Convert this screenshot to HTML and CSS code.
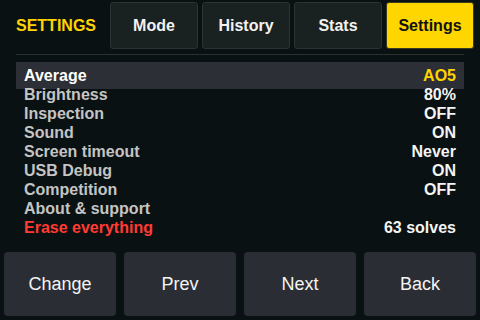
FILE: index.html
```html
<!DOCTYPE html>
<html lang="en">
<head>
    <meta charset="UTF-8">
    <meta name="viewport" content="width=device-width, initial-scale=1.0">
    <title>Settings</title>
    <link rel="stylesheet" href="styles.css">
</head>
<body>
    <!-- Top bar -->
    <div class="top-bar">
        <div class="page-title">SETTINGS</div>
        <div class="tabs">
            <div class="tab">Mode</div>
            <div class="tab">History</div>
            <div class="tab">Stats</div>
            <div class="tab active">Settings</div>
        </div>
    </div>
    <div class="divider"></div>

    <!-- Settings list -->
    <div class="settings-list">
        <div class="row selected"><span>Average</span><span class="value accent">AO5</span></div>
        <div class="row"><span>Brightness</span><span class="value">80%</span></div>
        <div class="row"><span>Inspection</span><span class="value">OFF</span></div>
        <div class="row"><span>Sound</span><span class="value">ON</span></div>
        <div class="row"><span>Screen timeout</span><span class="value">Never</span></div>
        <div class="row"><span>USB Debug</span><span class="value">ON</span></div>
        <div class="row"><span>Competition</span><span class="value">OFF</span></div>
        <div class="row"><span>About &amp; support</span><span class="value"></span></div>
        <div class="row danger"><span>Erase everything</span><span class="value">63 solves</span></div>
    </div>

    <!-- Bottom buttons -->
    <div class="button-bar">
        <div class="btn">Change</div>
        <div class="btn">Prev</div>
        <div class="btn">Next</div>
        <div class="btn">Back</div>
    </div>
</body>
</html>
```

FILE: styles.css
```css
body {
    margin: 0;
    padding: 0;
    width: 480px;
    height: 320px;
    display: flex;
    flex-direction: column;
    background-color: #0a1112;
    font-family: "Liberation Sans", Arial, sans-serif;
    overflow: hidden;
}

.top-bar {
    display: flex;
    align-items: center;
    padding: 2px 6px 0 16px;
    height: 47px;
}

.page-title {
    width: 94px;
    color: #ffd400;
    font-size: 16px;
    font-weight: bold;
}

.tabs {
    display: flex;
    gap: 4px;
    height: 100%;
}

.tab {
    box-sizing: border-box;
    width: 88px;
    height: 47px;
    display: flex;
    justify-content: center;
    align-items: center;
    background-color: #1a2121;
    border: 1px solid #2b3333;
    border-radius: 3px;
    color: #f2f2f2;
    font-size: 16px;
    font-weight: bold;
}

.tab.active {
    background-color: #ffd600;
    border-color: #3a3a20;
    color: #111111;
}

.divider {
    height: 1px;
    margin: 5px 16px 0 16px;
    background-color: #2a3131;
}

.settings-list {
    margin: 7px 16px 0 16px;
}

.row {
    display: flex;
    justify-content: space-between;
    padding: 0 8px;
    line-height: 19px;
    font-size: 16px;
    font-weight: bold;
    color: #c4c4c4;
}

.row .value {
    color: #f4f4f4;
}

.row.selected {
    padding-top: 4px;
    padding-bottom: 4px;
    margin-bottom: -4px;
    background-color: #2c2f36;
    color: #ffffff;
}

.row .value.accent {
    color: #ffd400;
}

.row.danger {
    color: #ff3b33;
}

.button-bar {
    display: flex;
    gap: 8px;
    margin-top: auto;
    padding: 0 4px 4px 4px;
}

.btn {
    flex: 1;
    height: 64px;
    display: flex;
    justify-content: center;
    align-items: center;
    background-color: #2a2d33;
    border-radius: 4px;
    color: #f4f4f4;
    font-size: 18px;
}
```
